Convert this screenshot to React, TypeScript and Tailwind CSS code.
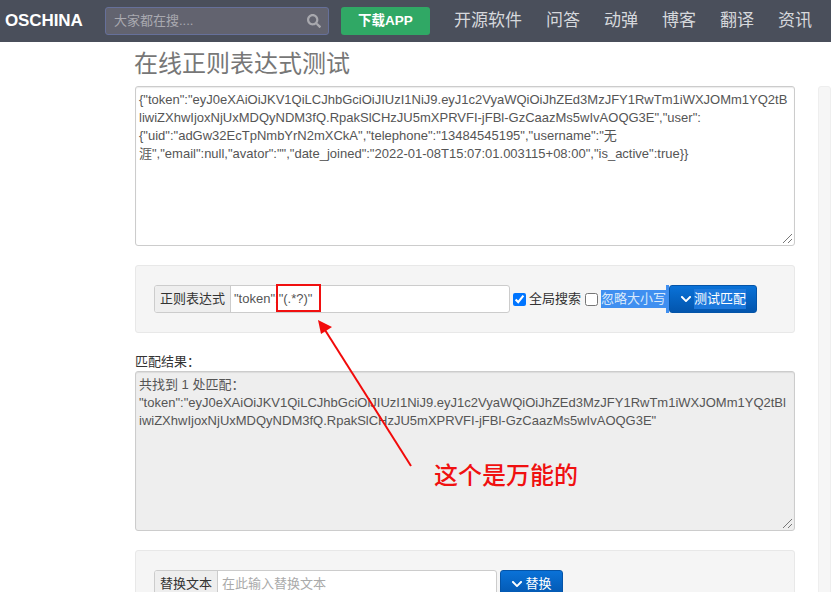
import React from "react";
import { FaChevronDown, FaSearch } from "react-icons/fa";

const font = "font-['Liberation_Sans','Noto_Sans_CJK_SC',sans-serif]";

function ResizeGrip() {
  return (
    <svg className="absolute bottom-[1px] right-[1px]" width="11" height="11" fill="none" stroke="#777" strokeWidth="1">
      <line x1="1" y1="10" x2="10" y2="1" />
      <line x1="6" y1="10" x2="10" y2="6" />
    </svg>
  );
}

export default function App() {
  const navItems = ["开源软件", "问答", "动弹", "博客", "翻译", "资讯"];

  return (
    <div className={`${font} relative h-[592px] w-[831px] overflow-hidden bg-white text-[13px] text-[#333]`}>
      {/* Navbar */}
      <header className="flex h-[42px] items-center bg-[#4a4f5b] text-white">
        <span className="ml-[5px] w-[100px] text-[17px] font-bold tracking-[-0.1px]">OSCHINA</span>
        <div className="flex h-[28px] w-[224px] items-center justify-between rounded-[3px] border border-[#66709a] bg-[#62636f] pl-[8px] pr-[7px] text-[13px] text-[#a9a9b0]">
          <span>大家都在搜....</span>
          <FaSearch className="h-[14px] w-[14px] text-[#a8a8ae]" />
        </div>
        <div className="ml-[12px] flex h-[28px] w-[89px] items-center justify-center rounded-[3px] bg-[#30a865] text-[13.5px] font-bold">下载APP</div>
        <nav className="ml-[24px] flex gap-[24px] text-[17px] text-[#d6d8dc]">
          {navItems.map((item) => (
            <span key={item} className="whitespace-nowrap">{item}</span>
          ))}
        </nav>
      </header>

      <div className="flex">
        {/* Main column */}
        <main className="ml-[135px] w-[660px] shrink-0">
          <h1 className="-ml-px mt-[7px] h-[37px] text-[24px] leading-[30px] text-[#777]">在线正则表达式测试</h1>

          <div className="relative h-[160px] rounded-[3px] border border-[#ccc] px-[3px] py-[4px] leading-[18px] text-[#555] shadow-[inset_0_1px_1px_rgba(0,0,0,0.08)]">
            <div className="whitespace-nowrap">{'{"token":"eyJ0eXAiOiJKV1QiLCJhbGciOiJIUzI1NiJ9.eyJ1c2VyaWQiOiJhZEd3MzJFY1RwTm1iWXJOMm1YQ2tB'}</div>
            <div className="whitespace-nowrap">{'liwiZXhwIjoxNjUxMDQyNDM3fQ.RpakSlCHzJU5mXPRVFI-jFBl-GzCaazMs5wIvAOQG3E","user":'}</div>
            <div className="whitespace-nowrap">{'{"uid":"adGw32EcTpNmbYrN2mXCkA","telephone":"13484545195","username":"无'}</div>
            <div className="whitespace-nowrap">{'涯","email":null,"avator":"","date_joined":"2022-01-08T15:07:01.003115+08:00","is_active":true}}'}</div>
            <ResizeGrip />
          </div>

          {/* Regex form */}
          <section className="mt-[19px] flex h-[68px] items-center rounded-[3px] border border-[#e8e8e8] bg-[#f5f5f5] pl-[18px]">
            <div className="flex h-[28px] w-[356px] overflow-hidden rounded-[3px] border border-[#ccc] bg-white">
              <span className="flex w-[76px] shrink-0 items-center justify-center border-r border-[#ccc] bg-[#eee]">正则表达式</span>
              <span className="flex items-center whitespace-nowrap pl-[3px] text-[#555]">{'"token":"(.*?)"'}</span>
            </div>
            <input type="checkbox" readOnly checked className="ml-[3px] h-[13px] w-[13px] accent-[#0075ff]" />
            <span className="ml-[3px] text-[#333]">全局搜索</span>
            <input type="checkbox" readOnly className="ml-[4px] h-[13px] w-[13px]" />
            <span className="ml-[3px] h-[18px] bg-[#3f8ff0] leading-[18px] text-[#d9e9fb]">忽略大小写</span>
            <span className="h-[28px] w-[3px] bg-[#3f8ff0]" />
            <button className="flex h-[28px] w-[88px] items-center justify-center gap-[2px] rounded-[3px] border border-[#0454a8] bg-gradient-to-b from-[#0a72d8] to-[#0355ad] text-white">
              <FaChevronDown className="h-[12px] w-[12px]" />
              <span className="bg-[#1c78dc]">测试匹配</span>
            </button>
          </section>

          {/* Result */}
          <div className="mt-[20px] h-[18px] leading-[18px]">匹配结果：</div>
          <div className="relative h-[160px] rounded-[3px] border border-[#ccc] bg-[#eee] px-[3px] py-[4px] leading-[18px] text-[#555] shadow-[inset_0_1px_1px_rgba(0,0,0,0.08)]">
            <div>共找到 1 处匹配：</div>
            <div className="whitespace-nowrap">{'"token":"eyJ0eXAiOiJKV1QiLCJhbGciOiJIUzI1NiJ9.eyJ1c2VyaWQiOiJhZEd3MzJFY1RwTm1iWXJOMm1YQ2tBl'}</div>
            <div className="whitespace-nowrap">{'iwiZXhwIjoxNjUxMDQyNDM3fQ.RpakSlCHzJU5mXPRVFI-jFBl-GzCaazMs5wIvAOQG3E"'}</div>
            <ResizeGrip />
          </div>

          {/* Replace form */}
          <section className="mt-[19px] flex h-[68px] items-start rounded-[3px] border border-[#e8e8e8] bg-[#f5f5f5] pl-[18px] pt-[19px]">
            <div className="flex h-[28px] w-[343px] overflow-hidden rounded-[3px] border border-[#ccc] bg-white">
              <span className="flex w-[63px] shrink-0 items-center justify-center border-r border-[#ccc] bg-[#eee]">替换文本</span>
              <span className="flex items-center pl-[4px] text-[#aaa]">在此输入替换文本</span>
            </div>
            <button className="ml-[3px] flex h-[28px] w-[63px] items-center justify-center gap-[2px] rounded-[3px] border border-[#0454a8] bg-gradient-to-b from-[#0a72d8] to-[#0355ad] text-white">
              <FaChevronDown className="h-[12px] w-[12px]" />
              替换
            </button>
          </section>
        </main>

        {/* Right sidebar */}
        <aside className="ml-[23px] mt-[44px] h-[600px] w-[40px] rounded-[3px] border border-[#eee] bg-[#f6f6f6]" />
      </div>

      {/* Screenshot annotations */}
      <div className="absolute left-[276px] top-[284px] h-[28px] w-[45px] border-2 border-[#f01010]" />
      <svg className="absolute left-0 top-0" width="831" height="592" fill="none">
        <line x1="411" y1="466" x2="325" y2="330" stroke="#f20a0a" strokeWidth="2" />
        <polygon points="318,320 332,327 321,334" fill="#f20a0a" />
      </svg>
      <span className="absolute left-[434px] top-[462px] font-['Liberation_Serif','Noto_Sans_CJK_SC',serif] text-[24px] font-medium leading-[28px] text-[#f01010]">这个是万能的</span>
    </div>
  );
}
